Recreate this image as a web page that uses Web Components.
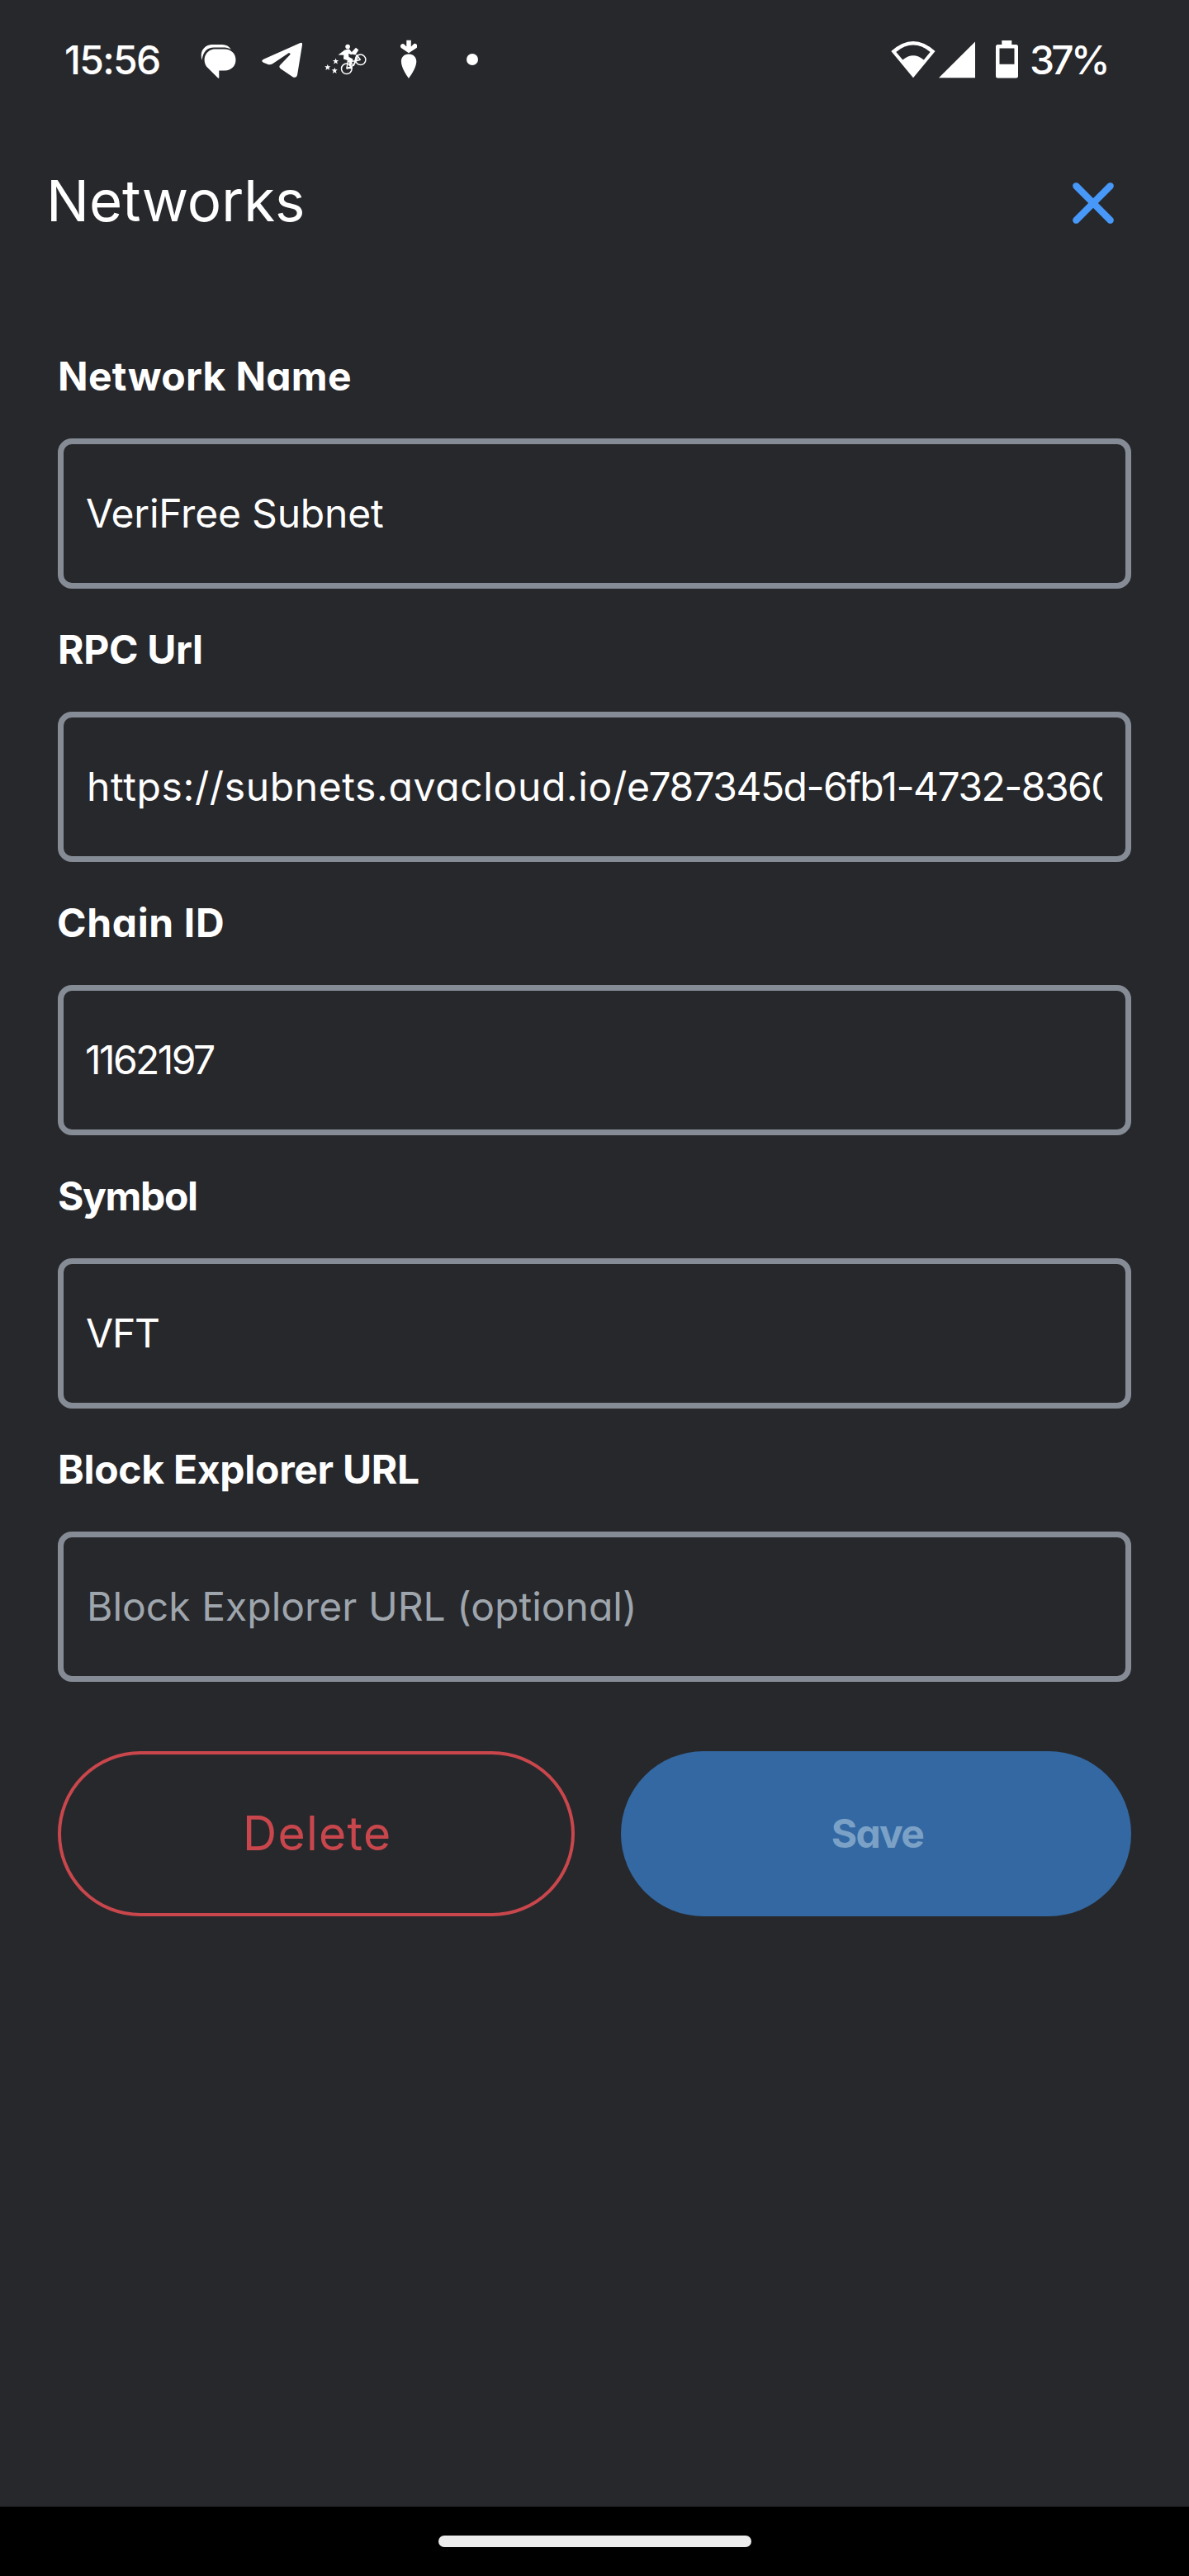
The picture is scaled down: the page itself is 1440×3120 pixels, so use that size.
<!DOCTYPE html>
<html lang="en">
<head>
<meta charset="utf-8">
<title>Networks</title>
<style>
html,body{margin:0;padding:0;background:#27282c}
body{font-family:Inter,Lato,sans-serif;color:#fff;-webkit-font-smoothing:antialiased}
</style>
</head>
<body>
<wallet-screen>
  <status-bar slot="status" time="15:56" battery="37%"></status-bar>
  <screen-header slot="header" label="Networks"></screen-header>
  <form-field label="Network Name" lx="73" lw="351" vx="105"><fit-text width="359">VeriFree Subnet</fit-text></form-field>
  <form-field label="RPC Url" lx="73" lw="171" vx="108" clipped><fit-text width="651">https://subnets.avacloud.io/</fit-text><fit-text width="559" part-length="22" style="margin-left:2px">e787345d-6fb1-4732-8360</fit-text></form-field>
  <form-field label="Chain ID" lx="71" lw="199" vx="105"><fit-text width="154">1162197</fit-text></form-field>
  <form-field label="Symbol" lx="71" lw="167" vx="105"><fit-text width="87">VFT</fit-text></form-field>
  <form-field label="Block Explorer URL" lx="73" lw="434" vx="109" placeholder><fit-text width="658">Block Explorer URL (optional)</fit-text></form-field>
  <pill-button slot="actions" kind="danger"><fit-text width="172">Delete</fit-text></pill-button>
  <pill-button slot="actions" kind="primary"><fit-text width="110.5">Save</fit-text></pill-button>
</wallet-screen>
<script>
const define = (name, render, after) => customElements.define(name, class extends HTMLElement {
  connectedCallback() {
    if (this.shadowRoot) return;
    this.attachShadow({ mode: 'open' }).innerHTML = render(this);
    if (after) after(this);
  }
});
const attr = (el, n) => el.getAttribute(n) || '';

define('wallet-screen', () => `<style>
  :host{display:flex;flex-direction:column;width:1440px;height:3120px;background:#27282c;overflow:hidden}
  main{flex:1;display:flex;flex-direction:column;gap:43px;padding:84px 70px 0;box-sizing:border-box}
  .actions{display:grid;grid-template-columns:626px 618px;gap:56px;margin-top:41px}
  footer{height:84px;background:#000;display:flex;align-items:center;justify-content:center}
  footer i{display:block;width:379px;height:14px;border-radius:7px;background:#ececec}
</style>
<slot name="status"></slot><slot name="header"></slot>
<main><slot></slot><div class="actions"><slot name="actions"></slot></div></main>
<footer><i></i></footer>`);

define('status-bar', el => `<style>
  :host{display:flex;align-items:center;height:144px;padding:0 100px 0 80px;box-sizing:border-box;font-size:48px;line-height:60px;font-weight:500}
  svg{display:block;fill:#fff;flex:none}
  fit-text{padding-top:2px}
  .chat{margin-left:50px}.plane{margin-left:31px}.bike{margin-left:27px}.carrot{margin-left:41px}.dot{margin-left:60px}
  .right{display:flex;align-items:center;margin-left:auto}
  .cell{margin-left:4px}.bat{margin-left:25px;margin-right:16px}
</style>
<fit-text width="113">${attr(el, 'time')}</fit-text>
<svg class="chat" width="43" height="46" viewBox="243 49 43 46"><path d="M244.7 73C241 62 248 54 258 54H269C274 54 277.500 56 280 60C276.500 58 273.500 57.500 270 57.500H259C250 57.500 245.500 64 244.700 73Z"/><path d="M260.500 59.500H272C280 59.500 285.500 65 285.500 72.500S280 85.500 272 85.500H265.300V94.500Q264.500 95 263.500 94L250 80.500C244 71 250 59.500 260.500 59.500Z"/></svg>
<svg class="plane" width="49" height="46" viewBox="317 51 49 46"><path d="M363 54.300Q366.600 52.700 366 56.500L360.200 92Q359.200 97 355 95.500L339.500 85Q337.300 83 339.300 80.700L351.300 68.200Q352.300 66 349.500 66.300L330.500 79Q327.500 81 324.500 80L319 77.700Q315.500 75.800 319.200 73.700Z"/></svg>
<svg class="bike" width="51" height="46" viewBox="392.500 50 51 46"><g fill="none" stroke="#fff" stroke-width="1.500"><circle cx="419.300" cy="84.300" r="6.300"/><circle cx="436.200" cy="73.300" r="6.200"/><path d="M419.300 84.300L428 80L431.500 67.500M419.300 84.300L421 75L428 80L433 70M420 75H430L436.200 73.300M431.500 67.500L436 73.500"/></g><circle cx="420.600" cy="57.600" r="2.800"/><path d="M409 67.500L417 61.500L422.500 60.500L426.500 65.500L425 67.300L421.600 66L422 70L427 72.500L424.500 82L422 81L423 75L415.500 72.500L415.800 67.800Z"/><path d="M426 63.500L430.500 58.800L433.800 61.500L430 67.500L425 66.500Z"/><path d="M419.500 84L426 84.500V82L421 82Z"/><g><path id="s" d="M396.300 78.700L397.200 81.300H399.800L397.800 83.100L398.600 85.900L396.300 84.300L393.900 85.900L394.700 83.100L392.700 81.300H395.400Z"/><use href="#s" x="9.800" y="-7.300"/><use href="#s" x="8.500" y="4"/></g></svg>
<svg class="carrot" width="20" height="48" viewBox="485 49.500 20 48"><path d="M492.300 50.300H497.800V58L500.300 55.400A2.900 2.900 0 0 1 504.600 59.500L495 65.700L485.800 59.500A2.900 2.900 0 0 1 489.900 55.400L492.300 58Z"/><path d="M495 67C501 67 504.300 71 504.300 76C504.300 83 498 92 495 96.500C492 92 485.900 83 485.900 76C485.900 71 489 67 495 67Z"/></svg>
<svg class="dot" width="14" height="14" viewBox="0 0 14 14"><circle cx="7" cy="7" r="7"/></svg>
<div class="right">
<svg width="54" height="46" viewBox="1078.700 49.300 54 46"><path fill-rule="evenodd" d="M1079 62.300Q1105.700 38.200 1132.300 62.300L1105.700 94.500ZM1085 63.200L1093 72.800Q1105.700 62.500 1118.500 72.800L1126.300 63.200Q1105.700 46.500 1085 63.200Z"/></svg>
<svg class="cell" width="44" height="46" viewBox="1136.700 49.300 44 46"><path d="M1180.700 50.700V94.500H1136.700Z"/></svg>
<svg class="bat" width="27" height="46" viewBox="1206 49 27 46"><path fill-rule="evenodd" d="M1213.300 49H1225.300V54H1230.500Q1233 54 1233 56.500V92Q1233 94.500 1230.500 94.500H1208.500Q1206 94.500 1206 92V56.500Q1206 54 1208.500 54H1213.300ZM1210.500 58.500V77.700H1228.500V58.500Z"/></svg>
<fit-text width="91">${attr(el, 'battery')}</fit-text>
</div>`);

define('screen-header', el => `<style>
  :host{display:flex;align-items:center;justify-content:space-between;height:197px;padding:0 91px 0 62px;box-sizing:border-box;font-size:69px;line-height:84px}
  svg{display:block;margin-top:7px}
</style><fit-text width="304">${attr(el, 'label')}</fit-text>
<svg width="50" height="50" viewBox="0 0 50 50" fill="none" stroke="#4798f8" stroke-width="8.300" stroke-linecap="round"><path d="M4.300 4.300L45.700 45.700M45.700 4.300L4.300 45.700"/></svg>`);

define('form-field', el => `<style>
  :host{display:block;font-size:48px;line-height:60px}
  .label{font-weight:700;margin-bottom:45px;padding:1px 0 0 ${attr(el, 'lx') - 70}px}
  .box{height:182px;box-sizing:border-box;border:7px solid #868c96;border-radius:17px;padding:0 28px 0 ${attr(el, 'vx') - 77}px;display:flex;align-items:center;color:#fff}
  :host([placeholder]) .box{color:#9ea5ac}
  .value{flex:1;min-width:0;display:flex}
  :host([clipped]) .value{overflow:hidden}
</style>
<div class="label"><fit-text width="${attr(el, 'lw')}">${attr(el, 'label')}</fit-text></div>
<div class="box"><div class="value"><slot></slot></div></div>`);

define('pill-button', el => attr(el, 'kind') === 'danger' ? `<style>
  :host{display:flex;align-items:center;justify-content:center;height:200px;box-sizing:border-box;border:4px solid #c9474c;border-radius:100px;color:#c9474c;font-size:57px;line-height:70px;padding:0 0 0 4px}
</style><slot></slot>` : `<style>
  :host{display:flex;align-items:center;justify-content:center;height:200px;box-sizing:border-box;border-radius:100px;background:#3368a2;color:#7ba1c6;font-size:48px;line-height:60px;font-weight:700;padding:0 0 0 4px}
</style><slot></slot>`);

/* Tracks a line of text so that its ink spans the given width.
   Defined last: it measures with the font of its already built parents. */
const pen = document.createElement('canvas').getContext('2d');
define('fit-text', () => `<style>
  :host{display:block;white-space:pre;flex:none;font-feature-settings:"cv11","pnum"}
  span{display:inline-block;vertical-align:top}
</style><span><slot></slot></span>`, el => {
  const cs = getComputedStyle(el);
  const node = el.firstChild;
  const n = +attr(el, 'part-length') || node.data.length;
  const range = document.createRange();
  range.setStart(node, 0);
  range.setEnd(node, n);
  const advance = range.getBoundingClientRect().width;
  pen.font = `${cs.fontWeight} ${cs.fontSize} ${cs.fontFamily}`;
  const first = pen.measureText(node.data[0]);
  const last = pen.measureText(node.data[n - 1]);
  const left = -first.actualBoundingBoxLeft;
  const right = last.width - last.actualBoundingBoxRight;
  const gap = (+attr(el, 'width') - (advance - left - right)) / (n - 1);
  const span = el.shadowRoot.querySelector('span');
  span.style.letterSpacing = gap.toFixed(3) + 'px';
  span.style.marginLeft = (-left).toFixed(2) + 'px';
  span.style.marginRight = (-gap - right).toFixed(2) + 'px';
});
</script>
</body>
</html>
